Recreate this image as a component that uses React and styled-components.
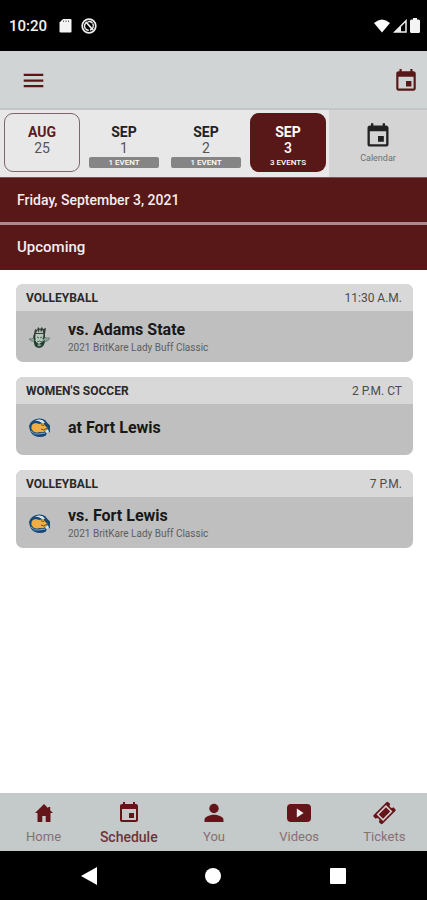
import React from "react";
import styled, { createGlobalStyle } from "styled-components";

const maroon = "#581818";

const GlobalStyle = createGlobalStyle`
  *, *::before, *::after { box-sizing: border-box; }
  body { margin: 0; background: #fff; font-family: Roboto, "Liberation Sans", sans-serif; }
  button { font: inherit; color: inherit; background: none; border: 0; padding: 0; cursor: pointer; }
  h1, h2, h3, p, ul { margin: 0; padding: 0; }
  svg { display: block; flex: none; }
`;

const Screen = styled.div`
  display: flex;
  flex-direction: column;
  min-height: 100vh;
`;

const StatusBar = styled.div`
  display: flex;
  align-items: center;
  justify-content: space-between;
  height: 51px;
  padding: 0 7px 0 9px;
  background: #000;
  color: #f2f2f2;
  font-size: 15px;
  font-weight: 500;
`;

const StatusGroup = styled.div`
  display: flex;
  align-items: center;
  gap: ${({ $gap }) => $gap}px;
`;

const Clock = styled.span`
  margin-right: 3px;
`;

const Header = styled.header`
  display: flex;
  align-items: center;
  justify-content: space-between;
  height: 59px;
  padding: 2px 8px 0 20px;
  background: #d0d4d5;
  border-bottom: 2px solid #c3c6c6;
  color: ${maroon};
`;

const IconButton = styled.button`
  display: flex;
`;

const DateStrip = styled.nav`
  display: flex;
  height: 67px;
  background: #e8e8e8;
`;

const Days = styled.div`
  flex: 1;
  display: grid;
  grid-template-columns: repeat(4, 1fr);
  gap: 6px;
  padding: 3px 3px 5px 4px;
`;

const Day = styled.button`
  display: flex;
  flex-direction: column;
  align-items: center;
  padding-top: 10px;
  border: 1px solid ${({ $variant }) => ($variant === "outlined" ? "#7c6669" : "transparent")};
  border-radius: 9px;
  background: ${({ $variant }) => ($variant === "selected" ? maroon : "transparent")};
  background-clip: border-box;
  color: ${({ $variant }) => ($variant === "selected" ? "#fff" : "#555")};
  font-weight: ${({ $variant }) => ($variant === "selected" ? 500 : 400)};
`;

const Month = styled.span`
  font-size: 14px;
  line-height: 16px;
  font-weight: 700;
  color: ${({ $variant }) =>
    ({ outlined: "#5c1a22", selected: "#fff" })[$variant] || "#222"};
`;

const DayNumber = styled.span`
  font-size: 14px;
  line-height: 17px;
`;

const EventCount = styled.span`
  align-self: stretch;
  margin: 0 2px;
  border-radius: 2px;
  background: ${({ $plain }) => ($plain ? "transparent" : "#858585")};
  color: #fff;
  font-size: 8px;
  line-height: 11px;
  font-weight: 500;
  text-align: center;
`;

const CalendarButton = styled.button`
  display: flex;
  flex-direction: column;
  align-items: center;
  gap: 2px;
  width: 98px;
  padding-top: 12px;
  background: #d4d4d4;
  color: #222;
`;

const CalendarLabel = styled.span`
  font-size: 9px;
  line-height: 12px;
  color: #707070;
`;

const Banner = styled.h2`
  height: ${({ $ruled }) => ($ruled ? 48 : 45)}px;
  padding: 13px 17px;
  border-top: ${({ $ruled }) => ($ruled ? "3px solid #a58c8f" : "1px solid #7d5558")};
  background: ${maroon};
  color: #f2eded;
  font-size: ${({ $ruled }) => ($ruled ? 15 : 14)}px;
  line-height: 18px;
  font-weight: 500;
`;

const Events = styled.main`
  flex: 1;
  display: flex;
  flex-direction: column;
  gap: 15px;
  padding: 14px 14px 16px 16px;
`;

const Card = styled.article`
  border-radius: 7px;
  overflow: hidden;
  background: #bfbfbf;
`;

const CardHeader = styled.div`
  display: flex;
  align-items: center;
  justify-content: space-between;
  height: 27px;
  padding: 0 11px 0 10px;
  background: #d8d8d8;
`;

const Sport = styled.h3`
  font-size: 12px;
  font-weight: 700;
  color: #2a2a2a;
`;

const Time = styled.span`
  font-size: 12px;
  color: #4c4c4c;
`;

const CardBody = styled.div`
  display: flex;
  align-items: center;
  gap: 16px;
  height: 51px;
  padding: ${({ $single }) => ($single ? "0 11px 4px" : "2px 11px 0")};
`;

const Opponent = styled.p`
  font-size: 16px;
  line-height: 20px;
  font-weight: 700;
  color: #181818;
`;

const Note = styled.p`
  font-size: 10px;
  line-height: 15px;
  color: #5e5e5e;
`;

const TabBar = styled.nav`
  display: grid;
  grid-template-columns: repeat(5, 1fr);
  height: 58px;
  padding-left: 1px;
  background: #c4c9c9;
`;

const Tab = styled.button`
  display: flex;
  flex-direction: column;
  align-items: center;
  padding-top: 7px;
  color: #641519;
`;

const TabIcon = styled.span`
  display: flex;
  align-items: center;
  height: 26px;
`;

const TabLabel = styled.span`
  margin-top: 2px;
  font-size: ${({ $active }) => ($active ? 14 : 13)}px;
  line-height: 18px;
  font-weight: ${({ $active }) => ($active ? 500 : 400)};
  color: ${({ $active }) => ($active ? "#6c353b" : "#886f74")};
`;

const SystemBar = styled.div`
  display: grid;
  grid-template-columns: repeat(3, 1fr);
  place-items: center;
  height: 49px;
  padding: 0 27px;
  background: #000;
  color: #fff;
`;

const EventIcon = ({ size }) => (
  <svg width={size} height={size} viewBox="0 0 24 24" fill="currentColor" aria-hidden="true">
    <path d="M17 12h-5v5h5v-5zM16 1v2H8V1H6v2H5c-1.1 0-2 .9-2 2v14c0 1.1.9 2 2 2h14c1.1 0 2-.9 2-2V5c0-1.1-.9-2-2-2h-1V1h-2zm3 18H5V8h14v11z" />
  </svg>
);

const MenuIcon = () => (
  <svg width="27" height="27" viewBox="0 0 24 24" fill="currentColor" aria-hidden="true">
    <path d="M3.3 18h17.4v-2H3.3v2zm0-5h17.4v-2H3.3v2zm0-7v2h17.4V6H3.3z" />
  </svg>
);

const SdCardIcon = () => (
  <svg width="13" height="15" viewBox="0 0 13 15" aria-hidden="true">
    <path d="M4 1h7.500q1 0 1 1v11.500q0 1-1 1h-10q-1 0-1-1V4.500z" fill="#f4f4f4" />
    <path d="M4.500 2.500v1.500M7 2.500v1.500M9.500 2.500v1.500" stroke="#666" />
  </svg>
);

const NoSyncIcon = () => (
  <svg width="16" height="16" viewBox="0 0 16 16" fill="none" stroke="#eee" aria-hidden="true">
    <circle cx="8" cy="8" r="6.800" strokeWidth="1.700" />
    <path d="M4.300 10.500A4.200 4.200 0 0 1 6.500 4M9 12a4.200 4.200 0 0 0 2.800-6.300" strokeWidth="1.400" />
    <path d="M5 4l7 8" strokeWidth="1.800" />
    <path d="M7 3.800q3-1 4.600 1.600M4.300 10.500q1.500 2 3.500 1.700" strokeWidth="1.300" />
  </svg>
);

const WifiIcon = () => (
  <svg width="16" height="14" viewBox="0 0 16 14" fill="#fff" aria-hidden="true">
    <path d="M0 4Q8-3 16 4L8 13.500z" />
  </svg>
);

const SignalIcon = () => (
  <svg width="14" height="14" viewBox="0 0 14 14" aria-hidden="true">
    <path d="M1.800 13L13 1.800V13z" fill="none" stroke="#eee" strokeWidth="1.500" />
    <path d="M1.500 13L8 6.500V13z" fill="#eee" />
  </svg>
);

const BatteryIcon = () => (
  <svg width="10" height="15" viewBox="0 0 10 15" fill="#f4f4f4" aria-hidden="true">
    <path d="M3 0h4v1.500h1.500Q10 1.500 10 3v10.500q0 1.500-1.500 1.500h-7Q0 15 0 13.500V3q0-1.500 1.500-1.500H3z" />
  </svg>
);

const HomeIcon = () => (
  <svg width="26" height="26" viewBox="0 0 26 26" fill="currentColor" aria-hidden="true">
    <path d="M13 4L4 13H6.500V22h4.800v-6h3.400v6h4.800v-9H22l-2.800-2.800V7h-2v1.200z" />
  </svg>
);

const PersonIcon = () => (
  <svg width="26" height="26" viewBox="0 0 26 26" fill="currentColor" aria-hidden="true">
    <circle cx="13" cy="8.500" r="4.700" />
    <path d="M3.500 22v-2.300c0-3.200 6.300-4.900 9.500-4.900s9.500 1.700 9.500 4.900V22z" />
  </svg>
);

const VideoIcon = () => (
  <svg width="26" height="26" viewBox="0 0 26 26" aria-hidden="true">
    <rect x="1" y="4" width="24" height="18" rx="4" fill="currentColor" />
    <path d="M10.800 8.500v9l6.800-4.500z" fill="#f2eeee" />
  </svg>
);

const TicketIcon = () => (
  <svg width="26" height="26" viewBox="0 0 26 26" aria-hidden="true">
    <g transform="translate(13.500 13) rotate(-45) scale(.9) translate(-13 -13)">
      <path
        d="M3 6h20q1.500 0 1.500 1.500v3a2.500 2.500 0 0 0 0 5v3Q24.500 20 23 20H3q-1.500 0-1.500-1.500v-3a2.500 2.500 0 0 0 0-5v-3Q1.500 6 3 6z"
        fill="currentColor"
      />
      <rect x="6.500" y="8.800" width="13" height="8.400" fill="none" stroke="#d6d0d0" strokeWidth="1.700" />
    </g>
  </svg>
);

const AdamsLogo = () => (
  <svg width="25" height="25" viewBox="0 0 25 25" role="img" aria-label="Adams State">
    <path d="M7 9L8 4l2 1 1-3 2 2 2-2 1 2 3-1-1 6z" fill="#33413a" />
    <path d="M9 8l1.500-3 1 2.500L13 4l1 3 2-2v3z" fill="#b6c0b9" />
    <path d="M2 14q4 1 6-3h8q3 3 7 2-2 4-6 3.500H8Q4 17 2 14z" fill="#8fa598" stroke="#6d8276" />
    <path d="M7 15q-1 7 5 8 6-1 6-8l-3 2H10z" fill="#233b2e" />
    <path d="M9 10h7l-1 7-3 2-3-2z" fill="#b5c9bc" />
    <path d="M8 9q-2 3 0 6M17 9q1 3-1 5" fill="none" stroke="#26362d" strokeWidth="1.500" />
    <path d="M10 12l2 1M15 12l-2 1M10 17q2.500-2 5 0" fill="none" stroke="#4a6154" />
    <path d="M10 20l2-1 3 1-3 1.500z" fill="#8da596" />
  </svg>
);

const FortLewisLogo = () => (
  <svg width="25" height="25" viewBox="0 0 25 25" role="img" aria-label="Fort Lewis">
    <path d="M2 11Q4 4 12 3.500q6 0 8 4l3 3v7l-3-1-1 4q-6 3-12 0-4-2-5-9.500z" fill="#174878" />
    <path d="M8 5.500q7-2.500 10 2l-2 1q-4-3-8-3z" fill="#d8e5ed" />
    <path d="M4.500 14q-1-5 4-6l4 1 4-1 2 3 2 2q-2 5-8 4-5 2-8-3z" fill="#efad42" />
    <path d="M14 9.500l2 1 2-1M14 14l3 1 3-2" fill="none" stroke="#684f2b" />
    <path d="M4 16q3 4 8 3l6-1" fill="none" stroke="#83a7c1" />
    <path d="M18 16l3-2 1 3-3 1z" fill="#d5e1e8" />
  </svg>
);

const days = [
  { month: "AUG", day: 25, variant: "outlined" },
  { month: "SEP", day: 1, count: "1 EVENT" },
  { month: "SEP", day: 2, count: "1 EVENT" },
  { month: "SEP", day: 3, count: "3 EVENTS", variant: "selected" },
];

const events = [
  { sport: "VOLLEYBALL", time: "11:30 A.M.", title: "vs. Adams State", note: "2021 BritKare Lady Buff Classic", Logo: AdamsLogo },
  { sport: "WOMEN'S SOCCER", time: "2 P.M. CT", title: "at Fort Lewis", Logo: FortLewisLogo },
  { sport: "VOLLEYBALL", time: "7 P.M.", title: "vs. Fort Lewis", note: "2021 BritKare Lady Buff Classic", Logo: FortLewisLogo },
];

const tabs = [
  { label: "Home", icon: <HomeIcon /> },
  { label: "Schedule", icon: <EventIcon size={24} />, active: true },
  { label: "You", icon: <PersonIcon /> },
  { label: "Videos", icon: <VideoIcon /> },
  { label: "Tickets", icon: <TicketIcon /> },
];

export default function App() {
  return (
    <Screen>
      <GlobalStyle />
      <StatusBar>
        <StatusGroup $gap={9}>
          <Clock>10:20</Clock>
          <SdCardIcon />
          <NoSyncIcon />
        </StatusGroup>
        <StatusGroup $gap={3}>
          <WifiIcon />
          <SignalIcon />
          <BatteryIcon />
        </StatusGroup>
      </StatusBar>
      <Header>
        <IconButton aria-label="Menu"><MenuIcon /></IconButton>
        <IconButton aria-label="Open calendar"><EventIcon size={26} /></IconButton>
      </Header>
      <DateStrip aria-label="Dates">
        <Days>
          {days.map(({ month, day, count, variant }) => (
            <Day key={month + day} $variant={variant} aria-pressed={variant === "selected"}>
              <Month $variant={variant}>{month}</Month>
              <DayNumber>{day}</DayNumber>
              {count && <EventCount $plain={variant === "selected"}>{count}</EventCount>}
            </Day>
          ))}
        </Days>
        <CalendarButton>
          <EventIcon size={28} />
          <CalendarLabel>Calendar</CalendarLabel>
        </CalendarButton>
      </DateStrip>
      <Banner>Friday, September 3, 2021</Banner>
      <Banner $ruled>Upcoming</Banner>
      <Events>
        {events.map(({ sport, time, title, note, Logo }) => (
          <Card key={sport + time}>
            <CardHeader>
              <Sport>{sport}</Sport>
              <Time>{time}</Time>
            </CardHeader>
            <CardBody $single={!note}>
              <Logo />
              <div>
                <Opponent>{title}</Opponent>
                {note && <Note>{note}</Note>}
              </div>
            </CardBody>
          </Card>
        ))}
      </Events>
      <TabBar aria-label="Main">
        {tabs.map(({ label, icon, active }) => (
          <Tab key={label} aria-current={active ? "page" : undefined}>
            <TabIcon>{icon}</TabIcon>
            <TabLabel $active={active}>{label}</TabLabel>
          </Tab>
        ))}
      </TabBar>
      <SystemBar>
        <IconButton aria-label="Back">
          <svg width="18" height="20" viewBox="0 0 18 20" fill="currentColor"><path d="M17 1v18L1 10z" /></svg>
        </IconButton>
        <IconButton aria-label="Home screen">
          <svg width="18" height="18" viewBox="0 0 18 18" fill="currentColor"><circle cx="9" cy="9" r="8" /></svg>
        </IconButton>
        <IconButton aria-label="Recent apps">
          <svg width="18" height="18" viewBox="0 0 18 18" fill="currentColor"><rect x="1" y="1" width="16" height="16" rx="1" /></svg>
        </IconButton>
      </SystemBar>
    </Screen>
  );
}
